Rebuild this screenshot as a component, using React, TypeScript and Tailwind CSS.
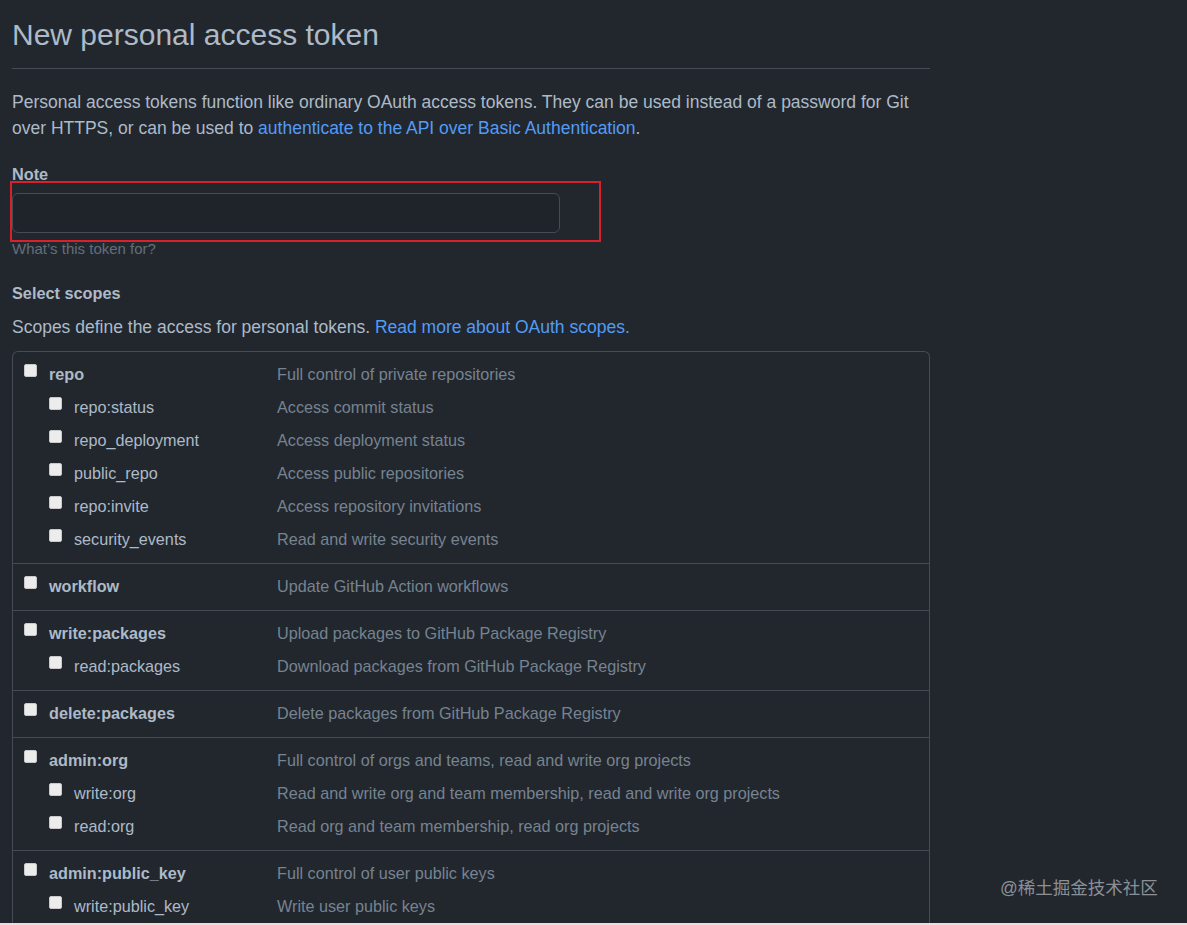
import React from 'react';

type Scope = { name: string; desc: string; children?: { name: string; desc: string }[] };

const scopes: Scope[] = [
  {
    name: 'repo',
    desc: 'Full control of private repositories',
    children: [
      { name: 'repo:status', desc: 'Access commit status' },
      { name: 'repo_deployment', desc: 'Access deployment status' },
      { name: 'public_repo', desc: 'Access public repositories' },
      { name: 'repo:invite', desc: 'Access repository invitations' },
      { name: 'security_events', desc: 'Read and write security events' },
    ],
  },
  { name: 'workflow', desc: 'Update GitHub Action workflows' },
  {
    name: 'write:packages',
    desc: 'Upload packages to GitHub Package Registry',
    children: [{ name: 'read:packages', desc: 'Download packages from GitHub Package Registry' }],
  },
  { name: 'delete:packages', desc: 'Delete packages from GitHub Package Registry' },
  {
    name: 'admin:org',
    desc: 'Full control of orgs and teams, read and write org projects',
    children: [
      { name: 'write:org', desc: 'Read and write org and team membership, read and write org projects' },
      { name: 'read:org', desc: 'Read org and team membership, read org projects' },
    ],
  },
  {
    name: 'admin:public_key',
    desc: 'Full control of user public keys',
    children: [
      { name: 'write:public_key', desc: 'Write user public keys' },
      { name: 'read:public_key', desc: 'Read user public keys' },
    ],
  },
];

function Checkbox() {
  return (
    <span className="mt-[6px] block h-[13px] w-[13px] shrink-0 rounded-[2px] border border-[#c9c9c9] bg-[#ececec]" />
  );
}

function ScopeRow({ name, desc, top }: { name: string; desc: string; top?: boolean }) {
  return (
    <div className="flex h-[33px] items-start">
      <div className={`flex w-[264px] items-start ${top ? 'pl-[11px]' : 'pl-[36px]'}`}>
        <Checkbox />
        <span className={`ml-[12px] text-[16.2px] leading-[33px] text-[#adbac7] ${top ? 'font-bold' : ''}`}>
          {name}
        </span>
      </div>
      <span className="text-[16.2px] leading-[33px] text-[#768390]">{desc}</span>
    </div>
  );
}

export default function App() {
  return (
    <div
      className="flex h-[925px] w-[1187px] flex-col overflow-hidden bg-[#22272e] text-[16px] text-[#adbac7]"
      style={{ fontFamily: '"Liberation Sans", Arial, sans-serif' }}
    >
      <div className="relative flex-1 overflow-hidden">
        <div className="w-[930px] pl-[12px]">
          <h1 className="border-b border-[#444c56] pb-[14px] pt-[16px] text-[30px] font-normal leading-[38px]">
            New personal access token
          </h1>
          <p className="mt-[20px] text-[17.5px] leading-[26px]">
            Personal access tokens function like ordinary OAuth access tokens. They can be used instead of a password for Git
            over HTTPS, or can be used to{' '}
            <a className="text-[#539bf5]">authenticate to the API over Basic Authentication</a>.
          </p>

          <div className="mt-[23px] text-[16.3px] font-bold leading-[20px]">Note</div>
          <div className="relative mt-[9px] h-[40px] w-[548px] rounded-[6px] border border-[#444c56] bg-[#1f242b]">
            <div className="pointer-events-none absolute left-[-3px] top-[-13px] h-[61px] w-[591px] border-2 border-[#d9212b]" />
          </div>
          <div className="mt-[7px] text-[15px] leading-[18px] text-[#636e7b]">What’s this token for?</div>

          <div className="mt-[25px] text-[16.3px] font-bold leading-[20px]">Select scopes</div>
          <p className="mt-[13px] text-[17.5px] leading-[22px]">
            Scopes define the access for personal tokens.{' '}
            <a className="text-[#539bf5]">Read more about OAuth scopes.</a>
          </p>

          <div className="mt-[13px] rounded-t-[6px] border border-b-0 border-[#444c56]">
            {scopes.map((s, i) => (
              <div key={s.name} className={`pb-[7px] pt-[6px] ${i > 0 ? 'border-t border-[#444c56]' : ''}`}>
                <ScopeRow name={s.name} desc={s.desc} top />
                {s.children?.map((c) => (
                  <ScopeRow key={c.name} name={c.name} desc={c.desc} />
                ))}
              </div>
            ))}
          </div>
        </div>

        <div
          className="absolute left-[1000px] top-[877px] text-[17.5px] leading-[22px] text-[#8b9096]"
          style={{ fontFamily: '"Liberation Sans", "Noto Sans CJK SC", sans-serif' }}
        >
          @稀土掘金技术社区
        </div>
      </div>
      <div className="h-[2px] shrink-0 bg-[#e6e2da]" />
    </div>
  );
}
